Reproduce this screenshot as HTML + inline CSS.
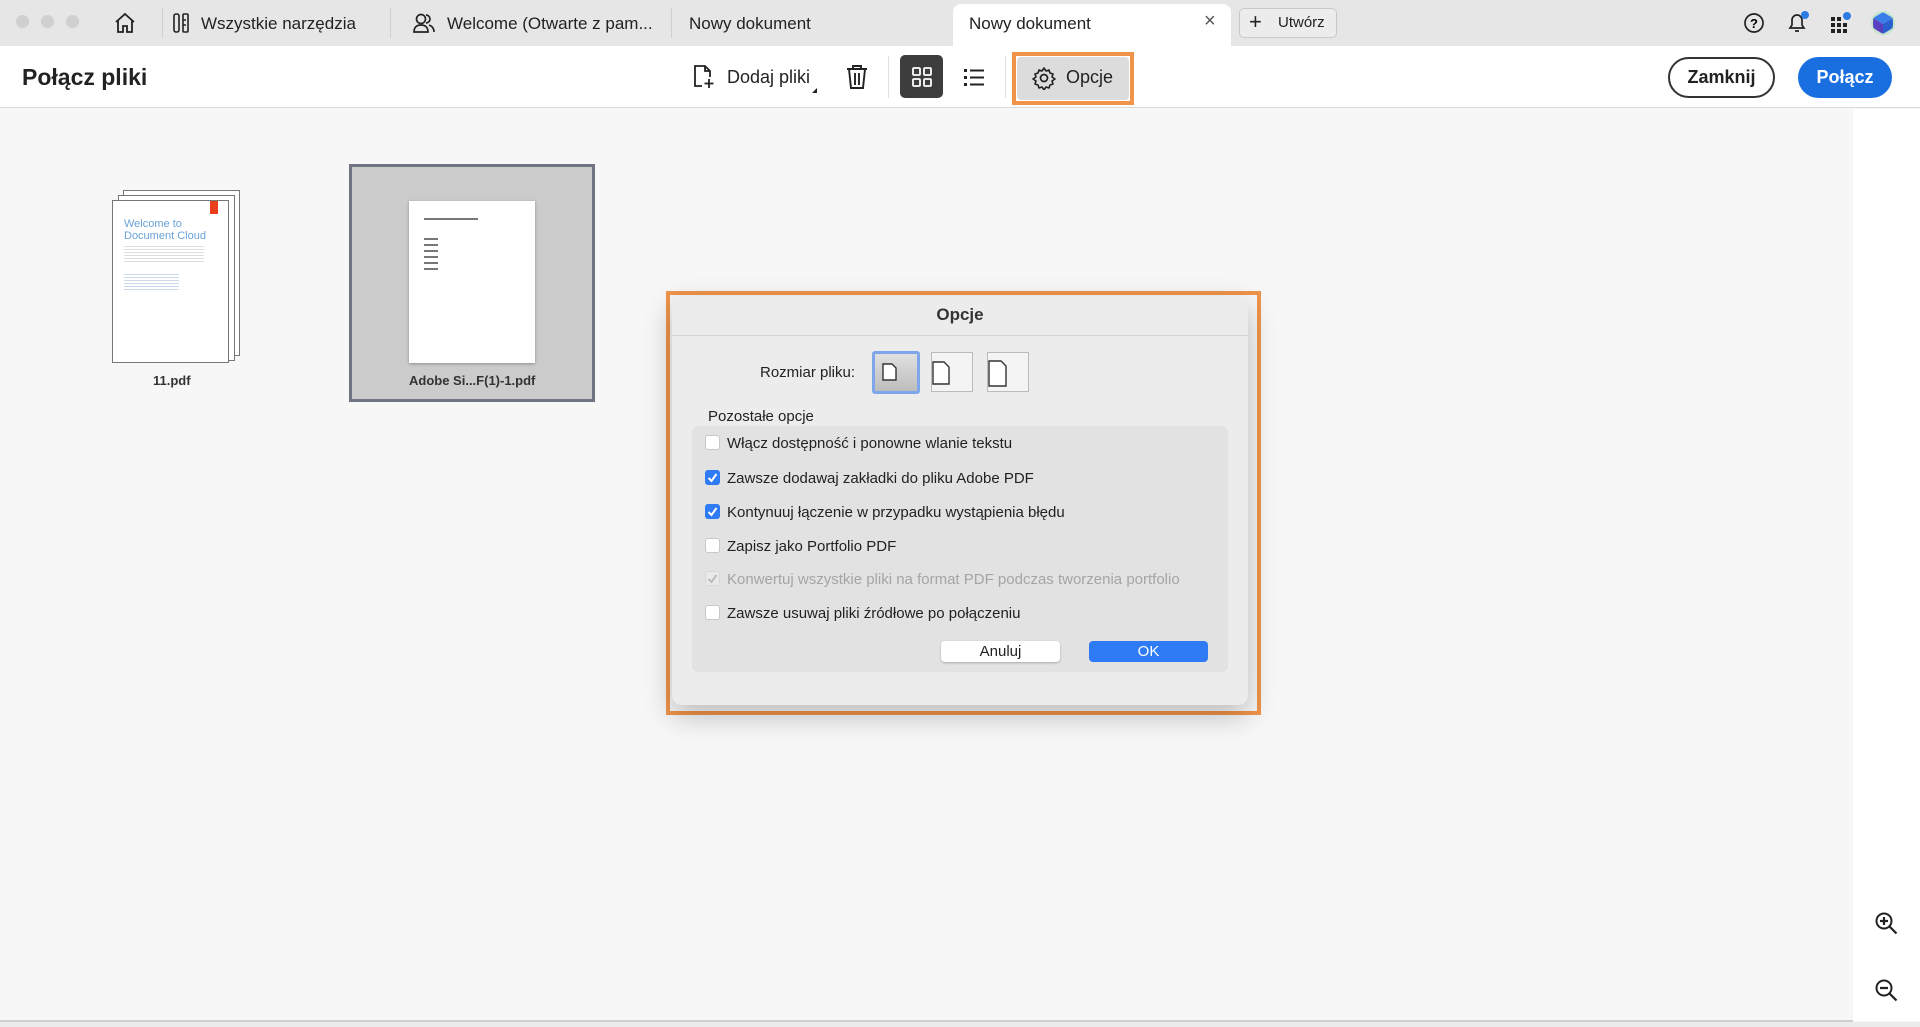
<!DOCTYPE html>
<html><head><meta charset="utf-8"><style>
*{margin:0;padding:0;box-sizing:border-box}
body{width:1920px;height:1027px;overflow:hidden;font-family:"Liberation Sans",sans-serif;background:#f7f7f7;position:relative;color:#222}
.abs{position:absolute}
.tabbar{left:0;top:0;width:1920px;height:46px;background:#e6e6e6}
.tb{font-size:17px;color:#222;top:14px}
.vd{width:1px;background:#cfcfcf}
.toolbar{left:0;top:46px;width:1920px;height:62px;background:#fff;border-bottom:1px solid #dadada}
svg{position:absolute}
.dlg{left:672px;top:296px;width:576px;height:409px;background:#ececec;border-radius:10px;box-shadow:0 10px 30px rgba(0,0,0,.25)}
.cb{width:15px;height:15px;border-radius:3px;background:#fff;border:1px solid #c8c8c8;left:705px}
.cbc{background:#2f7bf5;border-color:#2f7bf5}
.lbl{left:727px;font-size:15px;color:#222}
</style></head><body>
<div class="abs tabbar"></div>
<div class="abs" style="left:16px;top:15px;width:13px;height:13px;border-radius:50%;background:#d0d0d0"></div>
<div class="abs" style="left:41px;top:15px;width:13px;height:13px;border-radius:50%;background:#d0d0d0"></div>
<div class="abs" style="left:66px;top:15px;width:13px;height:13px;border-radius:50%;background:#d0d0d0"></div>
<svg style="left:113px;top:12px" width="24" height="22" viewBox="0 0 24 22"><path d="M3 10 L12 2 L21 10 M5 8 V20 H10 V14 H14 V20 H19 V8" fill="none" stroke="#222" stroke-width="1.8"/></svg>
<div class="abs vd" style="left:162px;top:8px;height:30px"></div>
<svg style="left:172px;top:12px" width="18" height="22" viewBox="0 0 18 22"><rect x="2" y="2" width="5" height="18" rx="2" fill="none" stroke="#222" stroke-width="1.6"/><rect x="11" y="2" width="5" height="18" rx="1" fill="none" stroke="#222" stroke-width="1.6"/><path d="M11 8h3M11 13h3" stroke="#222" stroke-width="1.4"/></svg>
<div class="abs tb" style="left:201px">Wszystkie narzędzia</div>
<div class="abs vd" style="left:390px;top:8px;height:30px"></div>
<svg style="left:412px;top:11px" width="24" height="24" viewBox="0 0 24 24"><circle cx="9" cy="8" r="4.5" fill="none" stroke="#222" stroke-width="1.7"/><path d="M2 21c0-5 3-7 7-7s7 2 7 7z" fill="none" stroke="#222" stroke-width="1.7"/><path d="M14 4a4 4 0 0 1 0 8M17 14c3 1 5 3 5 7" fill="none" stroke="#222" stroke-width="1.7"/></svg>
<div class="abs tb" style="left:447px">Welcome (Otwarte z pam...</div>
<div class="abs vd" style="left:671px;top:8px;height:30px"></div>
<div class="abs tb" style="left:689px">Nowy dokument</div>
<div class="abs" style="left:953px;top:4px;width:278px;height:42px;background:#fff;border-radius:8px 8px 0 0"></div>
<div class="abs tb" style="left:969px">Nowy dokument</div>
<div class="abs" style="left:1204px;top:10px;font-size:20px;color:#555">×</div>
<div class="abs" style="left:1239px;top:8px;width:98px;height:30px;border:1px solid #c8c8c8;border-radius:5px;background:#ececec"></div>
<div class="abs" style="left:1249px;top:9px;font-size:22px;color:#222">+</div>
<div class="abs" style="left:1278px;top:14px;font-size:15px">Utwórz</div>
<svg style="left:1743px;top:12px" width="22" height="22"><circle cx="11" cy="11" r="9" fill="none" stroke="#222" stroke-width="1.7"/><text x="11" y="16" font-size="13" text-anchor="middle" font-family="Liberation Sans" font-weight="bold">?</text></svg>
<svg style="left:1785px;top:10px" width="26" height="26"><path d="M5 18h14l-2-3v-5a5 5 0 0 0-10 0v5z M10 21h4" fill="none" stroke="#222" stroke-width="1.7"/><circle cx="20" cy="5" r="4" fill="#2d7be5"/></svg>
<svg style="left:1828px;top:10px" width="26" height="26"><g fill="#222"><rect x="3" y="7" width="4" height="4"/><rect x="9" y="7" width="4" height="4"/><rect x="3" y="13" width="4" height="4"/><rect x="9" y="13" width="4" height="4"/><rect x="15" y="13" width="4" height="4"/><rect x="3" y="19" width="4" height="4"/><rect x="9" y="19" width="4" height="4"/><rect x="15" y="19" width="4" height="4"/></g><circle cx="19" cy="6" r="4" fill="#2d7be5"/></svg>
<svg style="left:1871px;top:10px" width="24" height="26"><path d="M12 2 L22 8 L12 14 L2 8z" fill="#3b7de8"/><path d="M2 8 L12 14 V24 L2 18z" fill="#5a3fc0"/><path d="M22 8 L12 14 V24 L22 18z" fill="#2a5fd0"/><circle cx="12" cy="13" r="11" fill="none" stroke="#9fe3b0" stroke-opacity=".5" stroke-width="2"/></svg>

<div class="abs toolbar"></div>
<div class="abs" style="left:22px;top:64px;font-size:23px;font-weight:bold">Połącz pliki</div>
<svg style="left:692px;top:64px" width="24" height="26" viewBox="0 0 24 26"><path d="M10 22H3V2h10l5 5v6 M13 2v5h5 M17 15v9 M12.5 19.5h9" fill="none" stroke="#222" stroke-width="1.8"/></svg>
<div class="abs" style="left:727px;top:67px;font-size:18px">Dodaj pliki</div>
<div class="abs" style="left:812px;top:88px;width:0;height:0;border-left:5px solid transparent;border-bottom:5px solid #222"></div>
<svg style="left:845px;top:64px" width="24" height="26" viewBox="0 0 24 26"><path d="M2 5h20 M8 5V2h8v3 M4 5l2 19h12l2-19 M10 9v12M14 9v12" fill="none" stroke="#222" stroke-width="1.9"/></svg>
<div class="abs vd" style="left:888px;top:56px;height:42px;background:#e0e0e0"></div>
<div class="abs" style="left:900px;top:55px;width:43px;height:43px;background:#3d3d3d;border-radius:5px"></div>
<svg style="left:912px;top:67px" width="20" height="20"><g fill="none" stroke="#fff" stroke-width="1.8"><rect x="1" y="1" width="7" height="7" rx="1"/><rect x="12" y="1" width="7" height="7" rx="1"/><rect x="1" y="12" width="7" height="7" rx="1"/><rect x="12" y="12" width="7" height="7" rx="1"/></g></svg>
<svg style="left:963px;top:67px" width="22" height="20"><g fill="#222"><rect x="1" y="2" width="3" height="3"/><rect x="1" y="9" width="3" height="3"/><rect x="1" y="16" width="3" height="3"/><rect x="7" y="2.5" width="14" height="2"/><rect x="7" y="9.5" width="14" height="2"/><rect x="7" y="16.5" width="14" height="2"/></g></svg>
<div class="abs vd" style="left:1005px;top:56px;height:42px;background:#e0e0e0"></div>
<div class="abs" style="left:1012px;top:52px;width:122px;height:53px;border:4px solid #f0944a"></div>
<div class="abs" style="left:1017px;top:57px;width:112px;height:43px;background:#dcdcdc;border-radius:4px"></div>
<svg style="left:1032px;top:66px" width="24" height="24" viewBox="0 0 24 24"><path d="M12 2l2 3 3-1 1 3 3 1-1 3 3 2-3 2 1 3-3 1-1 3-3-1-2 3-2-3-3 1-1-3-3-1 1-3-3-2 3-2-1-3 3-1 1-3 3 1z" fill="none" stroke="#222" stroke-width="1.6" stroke-linejoin="round"/><circle cx="12" cy="12" r="3.5" fill="none" stroke="#222" stroke-width="1.7"/></svg>
<div class="abs" style="left:1066px;top:67px;font-size:18px">Opcje</div>
<div class="abs" style="left:1668px;top:57px;width:107px;height:41px;border:2px solid #333;border-radius:21px;text-align:center;line-height:37px;font-size:18px;font-weight:bold">Zamknij</div>
<div class="abs" style="left:1798px;top:57px;width:94px;height:41px;background:#1a6fe0;border-radius:21px;text-align:center;line-height:41px;font-size:18px;font-weight:bold;color:#fff">Połącz</div>

<div class="abs" style="left:1853px;top:109px;width:67px;height:912px;background:#fff"></div>
<svg style="left:1874px;top:911px" width="26" height="26"><circle cx="10" cy="10" r="7.5" fill="none" stroke="#222" stroke-width="2"/><path d="M15.5 15.5l7 7 M10 6v8 M6 10h8" stroke="#222" stroke-width="2.2"/></svg>
<svg style="left:1874px;top:978px" width="26" height="26"><circle cx="10" cy="10" r="7.5" fill="none" stroke="#222" stroke-width="2"/><path d="M15.5 15.5l7 7 M6 10h8" stroke="#222" stroke-width="2.2"/></svg>
<div class="abs" style="left:0;top:1020px;width:1853px;height:2px;background:#cfcfcf"></div>
<div class="abs" style="left:0;top:1022px;width:1920px;height:5px;background:#ececec"></div>

<div class="abs" style="left:123px;top:190px;width:117px;height:166px;background:#fff;border:1px solid #777"></div>
<div class="abs" style="left:118px;top:195px;width:117px;height:166px;background:#fff;border:1px solid #777"></div>
<div class="abs" style="left:112px;top:200px;width:117px;height:163px;background:#fff;border:1px solid #777"></div>
<div class="abs" style="left:210px;top:201px;width:8px;height:13px;background:#e8401c"></div>
<div class="abs" style="left:124px;top:218px;font-size:11px;color:#6aa2d8;line-height:12px">Welcome to<br>Document Cloud</div>
<div class="abs" style="left:124px;top:244px;width:80px;height:18px;background:repeating-linear-gradient(#fff 0 2px,#ddd 2px 3px)"></div>
<div class="abs" style="left:124px;top:272px;width:55px;height:18px;background:repeating-linear-gradient(#fff 0 2px,#cbd9ea 2px 3px)"></div>
<div class="abs" style="left:153px;top:373px;font-size:13px;font-weight:bold;color:#333">11.pdf</div>
<div class="abs" style="left:349px;top:164px;width:246px;height:238px;background:#cbcbcb;border:3px solid #6f7480"></div>
<div class="abs" style="left:409px;top:201px;width:126px;height:162px;background:#fff;box-shadow:0 1px 3px rgba(0,0,0,.3)"></div>
<div class="abs" style="left:424px;top:218px;width:54px;height:2px;background:#777"></div>
<div class="abs" style="left:424px;top:234px;width:14px;height:40px;background:repeating-linear-gradient(#fff 0 4px,#777 4px 6px)"></div>
<div class="abs" style="left:409px;top:373px;font-size:13px;font-weight:bold;color:#333">Adobe Si...F(1)-1.pdf</div>

<div class="abs" style="left:666px;top:291px;width:595px;height:424px;border:4px solid #f0944a"></div>
<div class="abs dlg"></div>
<div class="abs" style="left:672px;top:305px;width:576px;text-align:center;font-size:17px;font-weight:bold;color:#333">Opcje</div>
<div class="abs" style="left:672px;top:335px;width:576px;height:1px;background:#d4d4d4"></div>
<div class="abs" style="left:760px;top:364px;font-size:15px">Rozmiar pliku:</div>
<div class="abs" style="left:872px;top:351px;width:48px;height:43px;border:3px solid #7fa5ea;border-radius:3px;background:linear-gradient(#e0e0e0,#bdbdbd)"></div>
<div class="abs" style="left:931px;top:352px;width:42px;height:40px;border:1px solid #bbb;background:#f4f4f4"></div>
<div class="abs" style="left:987px;top:352px;width:42px;height:40px;border:1px solid #bbb;background:#f4f4f4"></div>
<svg style="left:880px;top:360px" width="160" height="30"><g fill="#fff" stroke="#333" stroke-width="1.4"><path d="M3 4h9l4 4v12H3z"/><path d="M53 2h11l5 5v17H53z"/><path d="M109 1h12l5 5v20H109z"/></g></svg>
<div class="abs" style="left:708px;top:408px;font-size:15px">Pozostałe opcje</div>
<div class="abs" style="left:692px;top:426px;width:536px;height:246px;background:#e2e2e2;border-radius:6px"></div>
<div class="abs cb" style="top:435px"></div><div class="abs lbl" style="top:435px">Włącz dostępność i ponowne wlanie tekstu</div>
<div class="abs cb cbc" style="top:470px"></div><div class="abs lbl" style="top:470px">Zawsze dodawaj zakładki do pliku Adobe PDF</div>
<div class="abs cb cbc" style="top:504px"></div><div class="abs lbl" style="top:504px">Kontynuuj łączenie w przypadku wystąpienia błędu</div>
<div class="abs cb" style="top:538px"></div><div class="abs lbl" style="top:538px">Zapisz jako Portfolio PDF</div>
<div class="abs cb" style="top:571px;background:#e9e9e9;border-color:#d8d8d8"></div><div class="abs lbl" style="top:571px;color:#a5a5a5">Konwertuj wszystkie pliki na format PDF podczas tworzenia portfolio</div>
<div class="abs cb" style="top:605px"></div><div class="abs lbl" style="top:605px">Zawsze usuwaj pliki źródłowe po połączeniu</div>
<svg style="left:705px;top:470px" width="15" height="50"><path d="M3.5 8l3 3 5-7 M3.5 42l3 3 5-7" fill="none" stroke="#fff" stroke-width="2"/></svg>
<svg style="left:705px;top:571px" width="15" height="15"><path d="M3.5 8l3 3 5-7" fill="none" stroke="#bbb" stroke-width="2"/></svg>
<div class="abs" style="left:941px;top:641px;width:119px;height:21px;background:#fff;border-radius:4px;box-shadow:0 1px 2px rgba(0,0,0,.25);text-align:center;font-size:15px;line-height:21px">Anuluj</div>
<div class="abs" style="left:1089px;top:641px;width:119px;height:21px;background:#2f7bf5;border-radius:4px;text-align:center;font-size:15px;line-height:21px;color:#fff">OK</div>
</body></html>
